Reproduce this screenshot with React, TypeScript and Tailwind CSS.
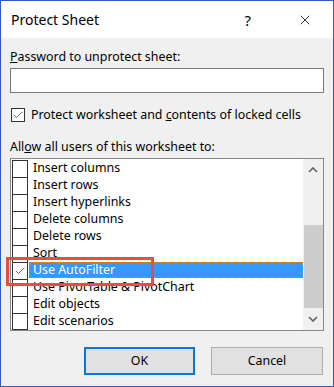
import { Check, X } from "lucide-react";

const items = [
  "Insert columns",
  "Insert rows",
  "Insert hyperlinks",
  "Delete columns",
  "Delete rows",
  "Sort",
  "Use AutoFilter",
  "Use PivotTable & PivotChart",
  "Edit objects",
  "Edit scenarios",
];

const font = { fontFamily: '"Noto Sans", "Open Sans", sans-serif' };

const App = () => {
  return (
    <div
      className="relative w-[334px] h-[387px] border border-[#2a5fc0] bg-[#f0f0f0] text-black text-[12.4px] leading-[16px] flex flex-col"
      style={font}
    >
      {/* title bar */}
      <div className="h-[37px] bg-white flex items-center pl-[10px] pr-[20px]">
        <span className="text-[14px] leading-[20px]">Protect Sheet</span>
        <span className="ml-auto text-[15px] leading-[20px] mr-[46px]">?</span>
        <X size={16} strokeWidth={1.2} />
      </div>

      <div className="flex flex-col px-[9px]">
        <div className="mt-[11px]">
          <span className="underline">P</span>assword to unprotect sheet:
        </div>
        <div className="mt-[3px] h-[25px] border border-[#7a7a7a] bg-white" />

        <div className="mt-[14px] flex items-center gap-[6px] pl-px">
          <div className="w-[14px] h-[14px] border border-[#333] bg-white flex items-center justify-center">
            <Check size={12} strokeWidth={1.4} className="text-[#333]" />
          </div>
          <span>
            Protect worksheet and <span className="underline">c</span>ontents of locked cells
          </span>
        </div>

        <div className="mt-[16px]">
          All<span className="underline">o</span>w all users of this worksheet to:
        </div>

        {/* list box */}
        <div className="mt-[3px] h-[173px] border border-[#828790] bg-white flex">
          <div className="flex-1 flex flex-col pl-px pt-px">
            {items.map((item, i) => {
              const selected = item === "Use AutoFilter";
              return (
                <div key={item} className="h-[17px] flex items-stretch">
                  <div
                    className={
                      "w-[16px] border-x border-t border-[#333] bg-white flex items-center justify-center " +
                      (i === items.length - 1 ? "border-b" : "")
                    }
                  >
                    {selected && <Check size={12} strokeWidth={1.4} className="text-[#333]" />}
                  </div>
                  <div
                    className={
                      "flex-1 flex items-center pl-[3px] ml-px mb-px " +
                      (selected ? "bg-[#3399ff] text-white border border-dotted border-[#d9862a]" : "border border-transparent")
                    }
                  >
                    {item}
                  </div>
                </div>
              );
            })}
          </div>
          {/* scrollbar */}
          <div className="w-[20px] bg-[#f0f0f0] flex flex-col items-center">
            <div className="h-[22px] flex items-center justify-center">
              <svg width="10" height="6" viewBox="0 0 10 6">
                <path d="M1 5 L5 1 L9 5" fill="none" stroke="#606060" strokeWidth="1.6" />
              </svg>
            </div>
            <div className="mt-[44px] h-[83px] w-[19px] bg-[#cdcdcd]" />
            <div className="flex-1 flex items-center justify-center">
              <svg width="10" height="6" viewBox="0 0 10 6">
                <path d="M1 1 L5 5 L9 1" fill="none" stroke="#606060" strokeWidth="1.6" />
              </svg>
            </div>
          </div>
        </div>

        {/* buttons */}
        <div className="mt-[16px] flex justify-end gap-[16px] pr-[1px]">
          <button className="w-[111px] h-[28px] border-2 border-[#0078d7] bg-[#e1e1e1]">OK</button>
          <button className="w-[112px] h-[28px] border border-[#adadad] bg-[#e1e1e1]">Cancel</button>
        </div>
      </div>

      {/* red highlight annotation */}
      <div className="absolute left-[5px] top-[256px] w-[148px] h-[29px] border-[3px] border-[#f04848]" />
    </div>
  );
};

export default App;
